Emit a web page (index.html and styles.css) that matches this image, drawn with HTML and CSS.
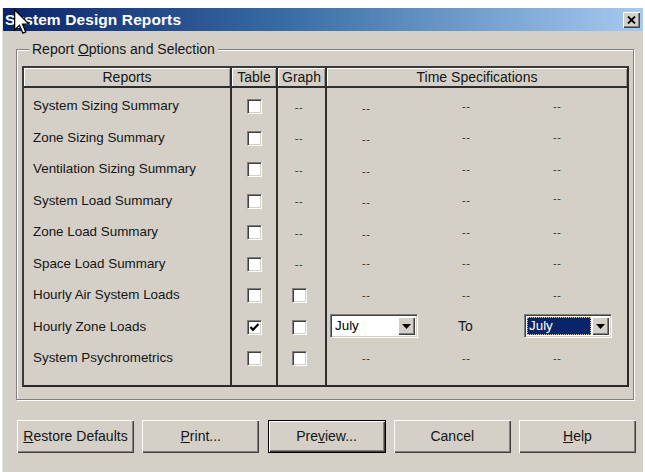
FILE: index.html
```html
<!DOCTYPE html>
<html lang="en">
<head>
<meta charset="utf-8">
<title>System Design Reports</title>
<link rel="stylesheet" href="styles.css">
</head>
<body>
<div class="window">
  <div class="titlebar">
    <span class="title">System Design Reports</span>
    <span class="close-btn">
      <svg width="9" height="8" viewBox="0 0 9 8"><path d="M1 0.5 L8 7.5 M8 0.5 L1 7.5" stroke="#000" stroke-width="1.8"/></svg>
    </span>
    <svg class="pointer" width="16" height="25" viewBox="0 0 12.6 19.6"><path d="M0.5 0.5 L0.5 16.5 L4.3 12.8 L7 19 L9.3 18 L6.7 11.9 L11.8 11.9 Z" fill="#fff" stroke="#000" stroke-width="1" stroke-linejoin="miter"/></svg>
  </div>

  <div class="content">
    <div class="group">
      <div class="legend">Report <u>O</u>ptions and Selection</div>
      <table class="reports">
        <colgroup>
          <col class="w-name"><col class="w-table"><col class="w-graph"><col class="w-time">
        </colgroup>
        <thead>
          <tr><th>Reports</th><th class="sep">Table</th><th class="sep">Graph</th><th class="sep">Time Specifications</th></tr>
        </thead>
        <tbody>
          <tr class="first">
            <td class="name">System Sizing Summary</td>
            <td class="sep mid"><span class="cb"></span></td>
            <td class="sep mid graph"><span class="dash">--</span></td>
            <td class="sep"><div class="time"><span class="slot s1"><span class="dash low">--</span></span><span class="slot s2"><span class="dash">--</span></span><span class="slot s3"><span class="dash">--</span></span></div></td>
          </tr>
          <tr>
            <td class="name">Zone Sizing Summary</td>
            <td class="sep mid"><span class="cb"></span></td>
            <td class="sep mid graph"><span class="dash">--</span></td>
            <td class="sep"><div class="time"><span class="slot s1"><span class="dash low">--</span></span><span class="slot s2"><span class="dash">--</span></span><span class="slot s3"><span class="dash">--</span></span></div></td>
          </tr>
          <tr>
            <td class="name">Ventilation Sizing Summary</td>
            <td class="sep mid"><span class="cb"></span></td>
            <td class="sep mid graph"><span class="dash">--</span></td>
            <td class="sep"><div class="time"><span class="slot s1"><span class="dash low">--</span></span><span class="slot s2"><span class="dash">--</span></span><span class="slot s3"><span class="dash">--</span></span></div></td>
          </tr>
          <tr>
            <td class="name">System Load Summary</td>
            <td class="sep mid"><span class="cb"></span></td>
            <td class="sep mid graph"><span class="dash">--</span></td>
            <td class="sep"><div class="time"><span class="slot s1"><span class="dash low">--</span></span><span class="slot s2"><span class="dash">--</span></span><span class="slot s3"><span class="dash high">--</span></span></div></td>
          </tr>
          <tr>
            <td class="name">Zone Load Summary</td>
            <td class="sep mid"><span class="cb"></span></td>
            <td class="sep mid graph"><span class="dash">--</span></td>
            <td class="sep"><div class="time"><span class="slot s1"><span class="dash low">--</span></span><span class="slot s2"><span class="dash">--</span></span><span class="slot s3"><span class="dash">--</span></span></div></td>
          </tr>
          <tr>
            <td class="name">Space Load Summary</td>
            <td class="sep mid"><span class="cb"></span></td>
            <td class="sep mid graph"><span class="dash">--</span></td>
            <td class="sep"><div class="time"><span class="slot s1"><span class="dash">--</span></span><span class="slot s2"><span class="dash">--</span></span><span class="slot s3"><span class="dash">--</span></span></div></td>
          </tr>
          <tr>
            <td class="name">Hourly Air System Loads</td>
            <td class="sep mid"><span class="cb"></span></td>
            <td class="sep mid graph"><span class="cb"></span></td>
            <td class="sep"><div class="time"><span class="slot s1"><span class="dash">--</span></span><span class="slot s2"><span class="dash">--</span></span><span class="slot s3"><span class="dash">--</span></span></div></td>
          </tr>
          <tr>
            <td class="name">Hourly Zone Loads</td>
            <td class="sep mid"><span class="cb checked"><svg width="11" height="11" viewBox="0 0 11 11"><path d="M1.5 5 L4 7.8 L9.5 2" fill="none" stroke="#000" stroke-width="2.2"/></svg></span></td>
            <td class="sep mid graph"><span class="cb"></span></td>
            <td class="sep">
              <div class="time">
                <span class="slot s1">
                  <span class="select"><span class="sel-text">July</span><span class="sel-btn"><svg width="9" height="5" viewBox="0 0 9 5"><path d="M0 0 H9 L4.5 5 Z" fill="#000"/></svg></span></span>
                </span>
                <span class="slot s2"><span class="to">To</span></span>
                <span class="slot s3">
                  <span class="select"><span class="sel-text focused">July</span><span class="sel-btn"><svg width="9" height="5" viewBox="0 0 9 5"><path d="M0 0 H9 L4.5 5 Z" fill="#000"/></svg></span></span>
                </span>
              </div>
            </td>
          </tr>
          <tr class="last">
            <td class="name">System Psychrometrics</td>
            <td class="sep mid"><span class="cb"></span></td>
            <td class="sep mid graph"><span class="cb"></span></td>
            <td class="sep"><div class="time"><span class="slot s1"><span class="dash">--</span></span><span class="slot s2"><span class="dash">--</span></span><span class="slot s3"><span class="dash">--</span></span></div></td>
          </tr>
        </tbody>
      </table>
    </div>

    <div class="buttons">
      <button class="btn"><u>R</u>estore Defaults</button>
      <button class="btn"><u>P</u>rint...</button>
      <button class="btn default">Pre<u>v</u>iew...</button>
      <button class="btn">Cancel</button>
      <button class="btn"><u>H</u>elp</button>
    </div>
  </div>
</div>
</body>
</html>
```

FILE: styles.css
```css
* { box-sizing: border-box; }

body {
  margin: 0;
  background: #fff;
  font-family: "Liberation Sans", Arial, sans-serif;
  font-size: 14px;
  color: #151515;
}

/* dialog frame */
.window {
  margin: 8px 2px 0 2px;
  height: 464px;
  background: #d4d0c8;
  border-left: 1px solid #e4e2dd;
}

.titlebar {
  position: relative;
  height: 23px;
  display: flex;
  align-items: center;
  justify-content: space-between;
  padding: 0 3px 0 2px;
  background: linear-gradient(to right, #0a246a 0%, #3a6ea5 45%, #a6caf0 100%);
}

.title {
  color: #fff;
  font-weight: bold;
  font-size: 15.5px;
  letter-spacing: 0.1px;
}

.close-btn {
  width: 17px;
  height: 16px;
  display: flex;
  align-items: center;
  justify-content: center;
  background: #d4d0c8;
  box-shadow: inset 1px 1px #fff, inset -1px -1px #404040, inset -2px -2px #808080;
}

/* mouse pointer resting over the caption */
.pointer {
  position: absolute;
  left: 11px;
  top: 1px;
}

.content {
  padding: 18px 7px 0 13px;
}

/* etched group box */
.group {
  display: flex;
  flex-direction: column;
  margin-right: 2px;
  padding: 0 4px 12px 5px;
  border: 1px solid #808080;
  box-shadow: inset 1px 1px #fff, 1px 1px #fff;
}

.legend {
  align-self: flex-start;
  margin: -9px 0 0 7px;
  padding: 0 3px;
  line-height: 16px;
  background: #d4d0c8;
}

/* report grid */
.reports {
  margin-top: 9px;
  width: 607px;
  table-layout: fixed;
  border-collapse: separate;
  border-spacing: 0;
  border: 2px solid #333;
  border-color: #3a3a3a #2a2a2a #2a2a2a #3a3a3a;
}

.w-name { width: 206px; }
.w-table { width: 46px; }
.w-graph { width: 49px; }
.w-time { width: 302px; }

.reports th {
  height: 20px;
  padding: 0;
  font-weight: normal;
  font-size: 14px;
  text-align: center;
  border-bottom: 2px solid #2e2e2e;
  box-shadow: inset 1px 1px #fff, inset -1px 0 #9a9892;
}

.reports .sep { border-left: 2px solid #2e2e2e; }

.reports td {
  height: 31.5px;
  padding: 0;
  vertical-align: middle;
}

.reports tr.first td { height: 33.5px; padding-top: 2px; }
.reports tr.last td { height: 42.5px; padding-bottom: 11px; }

.reports td.name {
  padding-left: 9px;
  font-size: 13.4px;
  white-space: nowrap;
}

.reports td.mid { text-align: center; }
.reports td.graph { padding-right: 5px; }

/* classic sunken checkbox */
.cb {
  display: inline-flex;
  align-items: center;
  justify-content: center;
  width: 15px;
  height: 15px;
  vertical-align: middle;
  background: #fff;
  border: 1px solid;
  border-color: #808080 #fff #fff #808080;
  box-shadow: inset 1px 1px #404040, inset -1px -1px #d4d0c8;
}

.dash {
  display: inline-block;
  font-size: 11px;
  letter-spacing: 0.5px;
  color: #333;
}
.dash.low { position: relative; top: 2px; }
.dash.high { position: relative; top: -2px; }

.time {
  display: flex;
  align-items: center;
  padding-left: 3px;
}

.slot {
  display: flex;
  align-items: center;
}
.s1 { width: 88px; }
.s2 { width: 106px; }
.s3 { width: 88px; }
.s1 .dash { margin-left: 32px; }
.s2 .dash { margin-left: 44px; }
.s3 .dash { margin-left: 29px; }

.to {
  margin-left: 40px;
  font-size: 14px;
}

/* drop-down list */
.select {
  display: flex;
  width: 88px;
  height: 24px;
  padding: 2px;
  background: #fff;
  border: 1px solid;
  border-color: #808080 #fff #fff #808080;
  box-shadow: inset 1px 1px #404040, inset -1px -1px #d4d0c8;
}

.sel-text {
  flex: 1;
  padding-left: 2px;
  line-height: 18px;
  font-size: 13.4px;
  color: #000;
}

.sel-text.focused {
  margin-right: 1px;
  background: #0a246a;
  color: #fff;
  outline: 1px dotted #d8c98a;
  outline-offset: -1px;
}

.sel-btn {
  width: 17px;
  display: flex;
  align-items: center;
  justify-content: center;
  background: #d4d0c8;
  box-shadow: inset 1px 1px #fff, inset -1px -1px #404040, inset -2px -2px #808080;
}

/* push buttons */
.buttons {
  display: flex;
  justify-content: space-between;
  margin-top: 20px;
  padding-left: 1px;
}

.btn {
  width: 117px;
  height: 33px;
  padding: 0;
  font-family: "Liberation Sans", Arial, sans-serif;
  font-size: 14px;
  color: #151515;
  background: #d4d0c8;
  border: none;
  box-shadow: inset 1px 1px #fff, inset -1px -1px #404040, inset -2px -2px #808080;
}

.btn.default {
  width: 118px;
  border: 1px solid #000;
}
```
